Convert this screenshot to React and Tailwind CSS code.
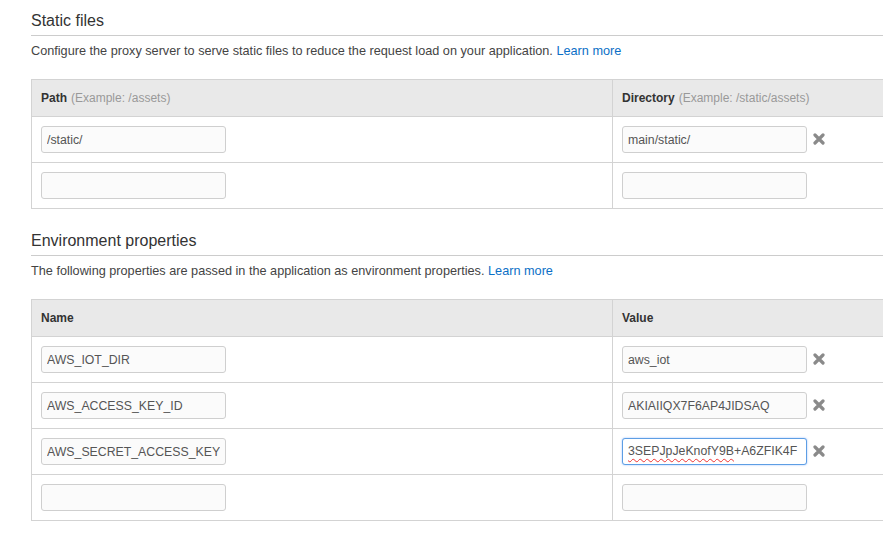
const FONT = { fontFamily: '"Liberation Sans", Arial, Helvetica, sans-serif' }

function Remove() {
  return (
    <svg width="12" height="12" viewBox="0 0 12 12" className="ml-[6px] shrink-0 -mt-[1px]">
      <path d="M2 2 L10 10 M10 2 L2 10" stroke="#8a8a8a" strokeWidth="3.2" strokeLinecap="round" />
    </svg>
  )
}

function Field({ value = '', focused = false, spell }) {
  if (focused) {
    return (
      <div className="w-[185px] h-[27px] rounded-[3px] border border-[#5d9ee4] bg-white px-[5px] flex items-center text-[12.3px] text-[#555] overflow-hidden whitespace-nowrap shadow-[0_0_2px_rgba(77,144,254,0.6)]">
        <span className="underline decoration-wavy decoration-[#e33] decoration-1 underline-offset-[3px]">{spell}</span>
        <span>{value}</span>
      </div>
    )
  }
  return (
    <input
      readOnly
      value={value}
      className="w-[185px] h-[27px] rounded-[3px] border border-[#cfcfcf] bg-[#fbfbfb] px-[5px] text-[12.3px] text-[#555] outline-none"
      style={FONT}
    />
  )
}

function Section({ title, desc, cols, rows }) {
  return (
    <section className="pt-[11px]">
      <h2 className="text-[16px] leading-[20px] text-[#333] pb-[4px] border-b border-[#cccccc]">{title}</h2>
      <p className="mt-[6px] text-[12.7px] leading-[18px] text-[#444]">
        {desc} <a className="text-[#0b6fc6]">Learn more</a>
      </p>
      <div className="mt-[19px] border border-[#d3d3d3]">
        <div className="grid grid-cols-[580px_1fr] h-[36px] bg-[#e9e9e9] text-[12px] text-[#333]">
          {cols.map((c, i) => (
            <div key={i} className={`flex items-center px-[9px] ${i ? 'border-l border-[#d3d3d3]' : ''}`}>
              <span className="font-bold">{c[0]}</span>
              {c[1] && <span className="ml-[4px] text-[#999]">{c[1]}</span>}
            </div>
          ))}
        </div>
        {rows.map((r, i) => (
          <div key={i} className="grid grid-cols-[580px_1fr] h-[46px] border-t border-[#d3d3d3]">
            <div className="flex items-center px-[9px]">
              <Field value={r[0]} />
            </div>
            <div className="flex items-center px-[9px] border-l border-[#d3d3d3]">
              {r.focused ? <Field focused spell={r.spell} value={r[1]} /> : <Field value={r[1]} />}
              {r[0] && <Remove />}
            </div>
          </div>
        ))}
      </div>
    </section>
  )
}

export default function App() {
  const secret = ['AWS_SECRET_ACCESS_KEY', '+A6ZFIK4F']
  secret.focused = true
  secret.spell = '3SEPJpJeKnofY9B'
  return (
    <div className="w-[883px] h-[543px] overflow-hidden bg-white" style={FONT}>
      <div className="ml-[31px] w-[880px]">
        <Section
          title="Static files"
          desc="Configure the proxy server to serve static files to reduce the request load on your application."
          cols={[['Path', '(Example: /assets)'], ['Directory', '(Example: /static/assets)']]}
          rows={[['/static/', 'main/static/'], ['', '']]}
        />
        <div className="h-[11px]" />
        <Section
          title="Environment properties"
          desc="The following properties are passed in the application as environment properties."
          cols={[['Name'], ['Value']]}
          rows={[
            ['AWS_IOT_DIR', 'aws_iot'],
            ['AWS_ACCESS_KEY_ID', 'AKIAIIQX7F6AP4JIDSAQ'],
            secret,
            ['', ''],
          ]}
        />
      </div>
    </div>
  )
}
